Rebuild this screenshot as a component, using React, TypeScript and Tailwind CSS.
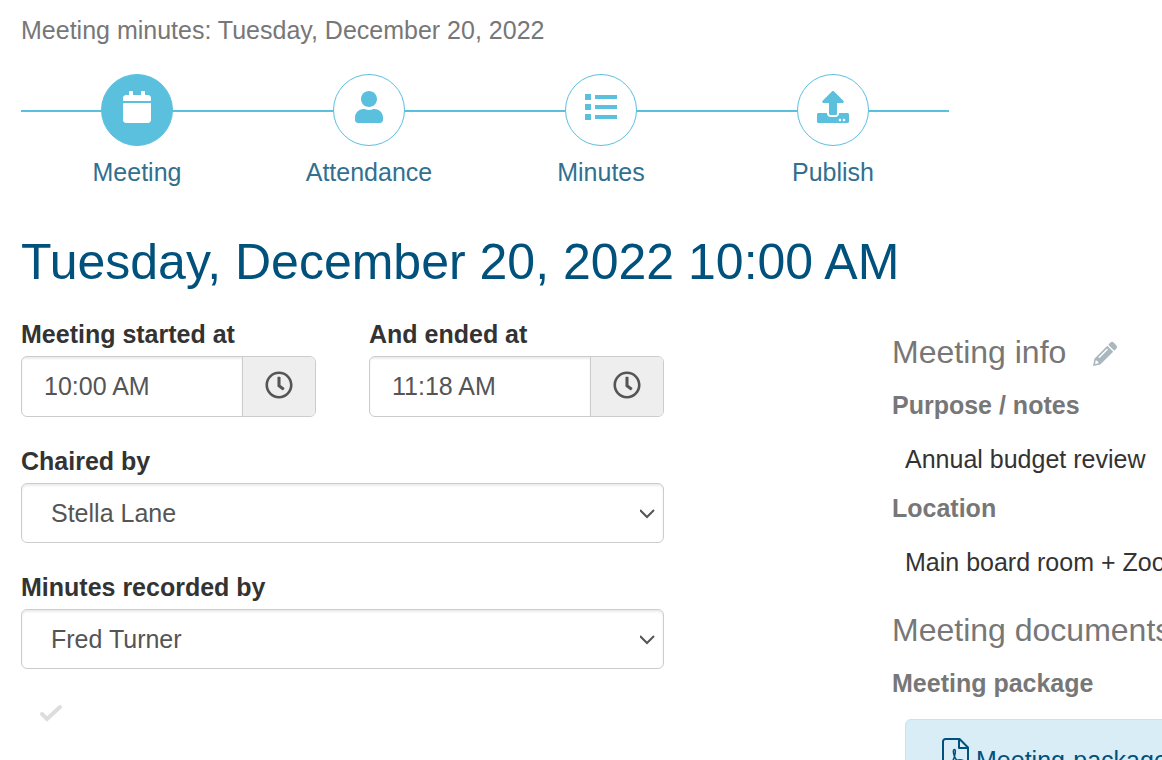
import type { ComponentType, ReactNode } from "react";
import { FaCalendar, FaRegClock, FaUpload, FaUser } from "react-icons/fa";

type Step = {
  label: string;
  icon: ComponentType<{ className?: string }>;
  active?: boolean;
};

const steps: Step[] = [
  { label: "Meeting", icon: FaCalendar, active: true },
  { label: "Attendance", icon: FaUser },
  { label: "Minutes", icon: ListIcon },
  { label: "Publish", icon: FaUpload },
];

const people = ["Stella Lane", "Fred Turner"];

function ListIcon({ className }: { className?: string }) {
  return (
    <svg viewBox="0 0 32 32" className={className} fill="currentColor">
      <path d="M0 3h6v6H0zM0 13h6v6H0zM0 23h6v6H0zM10 4h22v4H10zM10 14h22v4H10zM10 24h22v4H10z" />
    </svg>
  );
}

function PencilIcon() {
  return (
    <svg viewBox="0 0 26 26" className="h-[26px] w-[26px]" fill="currentColor">
      <path d="M18.500 1.600a2.200 2.200 0 0 1 3.100 0l2.800 2.800a2.200 2.200 0 0 1 0 3.100L22.200 9.700 16.300 3.800z" />
      <path
        fillRule="evenodd"
        d="M15.300 4.800l5.900 5.900L8.300 23.600 1 25l1.400-7.300zM15 7.600L6.300 16.300l1 1L16 8.600zM3.700 19.300l-.6 3.600 3.600-.6-1-2z"
      />
    </svg>
  );
}

function PdfIcon() {
  return (
    <svg viewBox="0 0 27 36" className="h-9 w-[27px] shrink-0 fill-none stroke-current stroke-2" strokeLinejoin="round">
      <path d="M3.500 1H17.500L26 9.500V32.500a2.500 2.500 0 0 1-2.500 2.500H3.500A2.500 2.500 0 0 1 1 32.500V3.500A2.500 2.500 0 0 1 3.500 1Z" />
      <path d="M17 1.500V10H25.500" />
      <path
        strokeWidth="1.500"
        d="M12.500 11.500c-1.800 0-1.200 4 0 7 1.500 3.500 4.500 6 7 6.200 2 .2 2.700-1.700 1-2.500-2.500-1-8 0-12 2.300-3 1.700-4 3.500-3 4 1.500.8 4-2.500 5.500-6 2-4.500 3.300-11 1.500-11Z"
      />
    </svg>
  );
}

function StepLink({ label, icon: Icon, active }: Step) {
  return (
    <li className="flex-1">
      <a href={`#${label.toLowerCase()}`} className="flex flex-col items-center gap-2 text-[#31708f]">
        <span
          className={
            active
              ? "flex h-18 w-18 justify-center rounded-full border border-[#5bc0de] bg-[#5bc0de] pt-4 text-white"
              : "flex h-18 w-18 justify-center rounded-full border border-[#5bc0de] bg-white pt-4 text-[#5bc0de]"
          }
        >
          <Icon className="h-8 w-8" />
        </span>
        <span className="leading-9">{label}</span>
      </a>
    </li>
  );
}

function TimeField({ id, label, value }: { id: string; label: string; value: string }) {
  return (
    <div className="min-w-0">
      <label htmlFor={id} className="mb-1 block font-bold">
        {label}
      </label>
      <div className="flex h-[61px] overflow-hidden rounded-md border border-[#ccc]">
        <input
          id={id}
          type="text"
          defaultValue={value}
          className="min-w-0 flex-1 px-[22px] pb-0.5 text-[#555] shadow-[inset_0_2px_2px_rgba(0,0,0,0.075)] outline-none"
        />
        <button
          type="button"
          aria-label="Pick a time"
          className="flex w-[73px] items-center justify-center border-l border-[#ccc] bg-[#eee] pb-1 text-[#555]"
        >
          <FaRegClock className="h-7 w-7" />
        </button>
      </div>
    </div>
  );
}

function PersonSelect({ id, label, value }: { id: string; label: string; value: string }) {
  return (
    <div className="mt-[26px]">
      <label htmlFor={id} className="mb-1 block font-bold">
        {label}
      </label>
      <div className="relative">
        <select
          id={id}
          defaultValue={value}
          className="block h-[60px] w-full appearance-none rounded-md border border-[#ccc] bg-white px-[29px] text-[#555] shadow-[inset_0_2px_2px_rgba(0,0,0,0.075)] outline-none"
        >
          {people.map((person) => (
            <option key={person}>{person}</option>
          ))}
        </select>
        <svg
          viewBox="0 0 16 10"
          className="pointer-events-none absolute top-[26px] right-2 h-2.5 w-4 fill-none stroke-[#555] stroke-2"
        >
          <path d="M0 1l7 7 7-7" />
        </svg>
      </div>
    </div>
  );
}

function InfoItem({ title, children }: { title: string; children: ReactNode }) {
  return (
    <div>
      <h3 className="leading-9 font-bold text-[#777]">{title}</h3>
      <div className="mt-[18px] mb-[13px] ml-[13px] leading-9 whitespace-nowrap">{children}</div>
    </div>
  );
}

export default function App() {
  return (
    <main className="h-screen overflow-hidden bg-white px-[21px] pt-3 font-['Liberation_Sans',Arial,sans-serif] text-[25px] leading-9 text-[#333]">
      <p className="text-[#777]">Meeting minutes: Tuesday, December 20, 2022</p>

      <nav aria-label="Steps" className="relative mt-[26px] w-[83%] max-w-[928px]">
        <div className="absolute inset-x-0 top-9 h-0.5 bg-[#5bc0de]" />
        <ol className="relative flex">
          {steps.map((step) => (
            <StepLink key={step.label} {...step} />
          ))}
        </ol>
      </nav>

      <h1 className="mt-10 text-[50px] leading-[64px] text-[#00517c]">Tuesday, December 20, 2022 10:00 AM</h1>

      <div className="mt-[22px] flex justify-between">
        <form className="w-[643px]">
          <div className="grid grid-cols-2 gap-[53px]">
            <TimeField id="started" label="Meeting started at" value="10:00 AM" />
            <TimeField id="ended" label="And ended at" value="11:18 AM" />
          </div>
          <PersonSelect id="chair" label="Chaired by" value="Stella Lane" />
          <PersonSelect id="recorder" label="Minutes recorded by" value="Fred Turner" />
          <svg
            viewBox="0 0 24 18"
            className="mt-[35px] ml-[18px] h-[18px] w-6 fill-none stroke-[#ddd] stroke-4"
            strokeLinecap="round"
          >
            <path d="M3 10l5 5L21 3" />
          </svg>
        </form>

        <aside className="w-[249px] pt-3">
          <div className="flex items-center gap-[26px] text-[#777]">
            <h2 className="text-[32px] leading-12">Meeting info</h2>
            <button type="button" aria-label="Edit meeting info" className="pt-1 text-[#a9b7be]">
              <PencilIcon />
            </button>
          </div>
          <div className="mt-[11px]">
            <InfoItem title="Purpose / notes">Annual budget review</InfoItem>
            <InfoItem title="Location">Main board room + Zoom</InfoItem>
          </div>
          <h2 className="mt-[26px] text-[32px] leading-12 whitespace-nowrap text-[#777]">Meeting documents</h2>
          <div className="mt-[11px]">
            <InfoItem title="Meeting package">
              <a
                href="#package"
                className="flex w-[420px] items-start gap-[7px] rounded-md border border-[#bce8f1] bg-[#d9edf7] px-9 py-[18px] text-[#00517c]"
              >
                <PdfIcon />
                <span className="mt-1">Meeting-package.pdf</span>
              </a>
            </InfoItem>
          </div>
        </aside>
      </div>
    </main>
  );
}
